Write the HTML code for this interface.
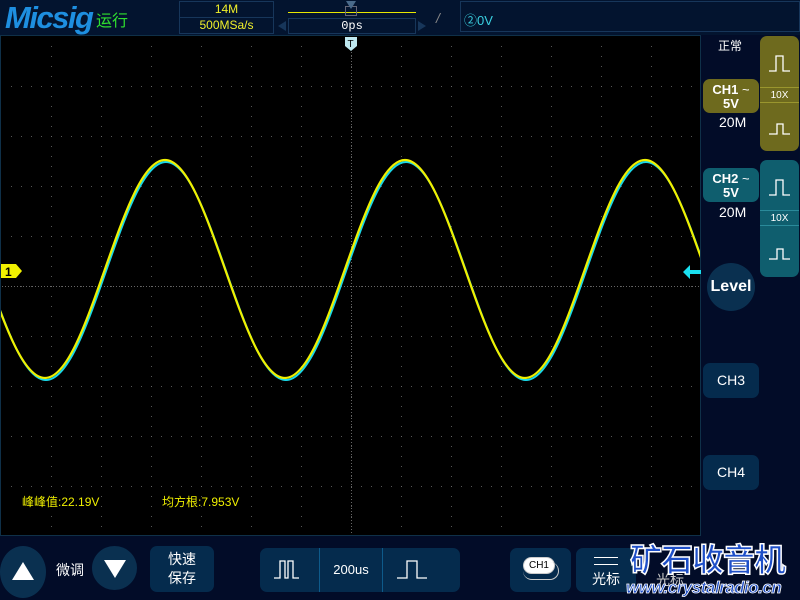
<!DOCTYPE html>
<html><head><meta charset="utf-8"><style>
*{margin:0;padding:0;box-sizing:border-box}
body{width:800px;height:600px;overflow:hidden;background:#020c28;font-family:"Liberation Sans","Noto Sans CJK SC",sans-serif;position:relative;color:#fff}
.a{position:absolute}
.btn{position:absolute;background:#052b4d;border-radius:7px;color:#fff;text-align:center}
</style></head><body>
<div class="a" style="left:0;top:0;width:800px;height:35px;background:#03142f"></div>
<div class="a" style="left:5px;top:0px;font:italic bold 31px 'Liberation Sans',sans-serif;color:#1e8fe0;letter-spacing:-1.5px">Micsig</div>
<div class="a" style="left:96px;top:7px;font-size:16px;color:#2fe02f;font-family:'Noto Sans CJK SC',sans-serif">运行</div>
<div class="a" style="left:179px;top:1px;width:95px;height:33px;border:1px solid #17365a"></div>
<div class="a" style="left:179px;top:17px;width:95px;height:1px;background:#17365a"></div>
<div class="a" style="left:179px;top:2px;width:95px;text-align:center;font-size:12px;color:#f0f02a">14M</div>
<div class="a" style="left:179px;top:18px;width:95px;text-align:center;font-size:12px;color:#f0f02a">500MSa/s</div>
<div class="a" style="left:288px;top:12px;width:128px;height:1px;background:#e8e800"></div>
<div class="a" style="left:345px;top:6px;width:12px;height:10px;border:1px solid #667"></div>
<div class="a" style="left:345px;top:1px;width:0;height:0;border-left:5px solid transparent;border-right:5px solid transparent;border-top:8px solid #4a6a8a;margin-left:1px"></div>
<div class="a" style="left:288px;top:18px;width:128px;height:16px;border:1px solid #17365a;text-align:center;font-size:12px;line-height:14px;font-family:'Liberation Mono',monospace">0ps</div>
<div class="a" style="left:278px;top:21px;border-top:5px solid transparent;border-bottom:5px solid transparent;border-right:8px solid #17365a"></div>
<div class="a" style="left:418px;top:21px;border-top:5px solid transparent;border-bottom:5px solid transparent;border-left:8px solid #17365a"></div>
<div class="a" style="left:436px;top:10px;font-size:14px;color:#888;font-style:italic">/</div>
<div class="a" style="left:460px;top:1px;width:340px;height:31px;border:1px solid #17365a"></div>
<div class="a" style="left:464px;top:10px;font-size:13px;color:#3ad0e0">&#9313;0V</div>

<div class="a" style="left:0;top:35px;width:701px;height:501px;background:#000;border:1px solid #0f3048"></div>
<svg class="a" style="left:0;top:0" width="800" height="600">
<defs><pattern id="g" x="1" y="36" width="50" height="50" patternUnits="userSpaceOnUse">
<rect x="0" y="0" width="1" height="1" fill="#666"/><rect x="10" y="0" width="1" height="1" fill="#555"/><rect x="20" y="0" width="1" height="1" fill="#555"/><rect x="30" y="0" width="1" height="1" fill="#555"/><rect x="40" y="0" width="1" height="1" fill="#555"/>
<rect x="0" y="10" width="1" height="1" fill="#555"/><rect x="0" y="20" width="1" height="1" fill="#555"/><rect x="0" y="30" width="1" height="1" fill="#555"/><rect x="0" y="40" width="1" height="1" fill="#555"/>
</pattern>
<clipPath id="c"><rect x="1" y="36" width="699" height="499"/></clipPath></defs>
<rect x="2" y="37" width="698" height="497" fill="url(#g)"/>
<line x1="2" y1="286.5" x2="700" y2="286.5" stroke="#666" stroke-dasharray="1 2"/>
<line x1="351.5" y1="37" x2="351.5" y2="534" stroke="#666" stroke-dasharray="1 2"/>
<g clip-path="url(#c)">
<path transform="translate(1,2)" d="M-15 269 c20.06 57.2,38.4 109,60 109 c21.6 0,39.94 -51.8,60 -109 c20.06 -57.2,38.4 -109,60 -109 c21.6 0,39.94 51.8,60 109 c20.06 57.2,38.4 109,60 109 c21.6 0,39.94 -51.8,60 -109 c20.06 -57.2,38.4 -109,60 -109 c21.6 0,39.94 51.8,60 109 c20.06 57.2,38.4 109,60 109 c21.6 0,39.94 -51.8,60 -109 c20.06 -57.2,38.4 -109,60 -109 c21.6 0,39.94 51.8,60 109" fill="none" stroke="#1ad8e8" stroke-width="2"/>
<path d="M-15 269 c20.06 57.2,38.4 109,60 109 c21.6 0,39.94 -51.8,60 -109 c20.06 -57.2,38.4 -109,60 -109 c21.6 0,39.94 51.8,60 109 c20.06 57.2,38.4 109,60 109 c21.6 0,39.94 -51.8,60 -109 c20.06 -57.2,38.4 -109,60 -109 c21.6 0,39.94 51.8,60 109 c20.06 57.2,38.4 109,60 109 c21.6 0,39.94 -51.8,60 -109 c20.06 -57.2,38.4 -109,60 -109 c21.6 0,39.94 51.8,60 109" fill="none" stroke="#f0f000" stroke-width="2.2"/>
</g>
<path d="M1 264 h15 l6 7 l-6 7 h-15z" fill="#f0f000"/>
<text x="5" y="276" font-family="Liberation Sans" font-weight="bold" font-size="12" fill="#000">1</text>
<path d="M683 272 l7 -7 v5 h11 v4 h-11 v5z" fill="#1ae0f0"/>
<path d="M345 37 h12 v9 l-6 5 l-6 -5z" fill="#bfe8f0"/>
<text x="347.5" y="47" font-family="Liberation Sans" font-size="10" fill="#000">T</text>
</svg>
<div class="a" style="left:22px;top:493px;font-size:12px;color:#f0f000">峰峰值:22.19V</div>
<div class="a" style="left:162px;top:493px;font-size:12px;color:#f0f000">均方根:7.953V</div>

<!-- right panel -->
<div class="a" style="left:718px;top:37px;font-size:12px">正常</div>
<div class="btn" style="left:703px;top:79px;width:56px;height:34px;background:#6e6a1e;font-weight:bold;font-size:13px;line-height:14px;padding-top:4px">CH1 <span style="font-weight:normal">~</span><br>5V</div>
<div class="a" style="left:719px;top:114px;font-size:14px">20M</div>
<div class="btn" style="left:703px;top:168px;width:56px;height:34px;background:#0f5e6e;font-weight:bold;font-size:13px;line-height:14px;padding-top:4px">CH2 <span style="font-weight:normal">~</span><br>5V</div>
<div class="a" style="left:719px;top:204px;font-size:14px">20M</div>
<div class="btn" style="left:760px;top:36px;width:39px;height:115px;background:#6e6a1e"></div>
<div class="a" style="left:760px;top:87px;width:39px;height:16px;border-top:1px solid #9a962e;border-bottom:1px solid #9a962e;text-align:center;font-size:10px;line-height:15px">10X</div>
<div class="btn" style="left:760px;top:160px;width:39px;height:117px;background:#0f5e6e"></div>
<div class="a" style="left:760px;top:210px;width:39px;height:16px;border-top:1px solid #2a8a9a;border-bottom:1px solid #2a8a9a;text-align:center;font-size:10px;line-height:15px">10X</div>
<svg class="a" style="left:760px;top:36px" width="40" height="241"><g fill="none" stroke="#fff" stroke-width="1.3">
<path d="M9 35 h7 v-15 h7 v15 h7"/><path d="M9 98 h8 v-10 h6 v10 h7"/>
<path d="M9 159 h7 v-15 h7 v15 h7"/><path d="M9 223 h8 v-10 h6 v10 h7"/></g></svg>
<div class="a" style="left:707px;top:263px;width:48px;height:48px;border-radius:50%;background:#0a3050;text-align:center;font-size:16px;font-weight:bold;line-height:48px">Level</div>
<div class="btn" style="left:703px;top:363px;width:56px;height:35px;font-size:14px;line-height:35px">CH3</div>
<div class="btn" style="left:703px;top:455px;width:56px;height:35px;font-size:14px;line-height:35px">CH4</div>

<!-- bottom -->
<div class="a" style="left:0;top:546px;width:46px;height:52px;border-radius:50%;background:#0a3050"></div>
<div class="a" style="left:12px;top:562px;border-left:11px solid transparent;border-right:11px solid transparent;border-bottom:18px solid #fff"></div>
<div class="a" style="left:56px;top:560px;font-size:14px">微调</div>
<div class="a" style="left:92px;top:546px;width:45px;height:44px;border-radius:50%;background:#0a3050"></div>
<div class="a" style="left:104px;top:560px;border-left:11px solid transparent;border-right:11px solid transparent;border-top:18px solid #fff"></div>
<div class="btn" style="left:150px;top:546px;width:64px;height:46px;font-size:14px;line-height:19px;padding-top:4px">快速<br>保存</div>
<div class="btn" style="left:260px;top:548px;width:200px;height:44px"></div>
<div class="a" style="left:319px;top:548px;width:1px;height:44px;background:#0e5a8a"></div>
<div class="a" style="left:382px;top:548px;width:1px;height:44px;background:#0e5a8a"></div>
<div class="a" style="left:320px;top:562px;width:62px;text-align:center;font-size:13px">200us</div>
<svg class="a" style="left:260px;top:548px" width="200" height="44"><g fill="none" stroke="#fff" stroke-width="1.3">
<path d="M14 30 h6 v-17 h5 v17 h3 v-17 h5 v17 h6"/><path d="M137 30 h10 v-17 h10 v17 h10"/></g></svg>
<div class="btn" style="left:510px;top:548px;width:61px;height:44px"></div>
<div class="a" style="left:523px;top:557px;width:32px;height:17px;border-radius:9px;border:1px solid #ccc;background:#fff;color:#000;font-size:10px;text-align:center;line-height:15px">CH1</div>
<div class="a" style="left:523px;top:562px;width:36px;height:18px;border-radius:9px;border-bottom:1px solid #ccc;border-right:1px solid #ccc"></div>
<div class="btn" style="left:576px;top:548px;width:60px;height:44px"></div>
<div class="a" style="left:594px;top:557px;width:24px;height:8px;border-top:1.5px solid #fff;border-bottom:1.5px solid #fff"></div>
<div class="a" style="left:592px;top:569px;font-size:14px">光标</div>
<div class="a" style="left:656px;top:570px;font-size:14px;color:#ccc">光标</div>
<div class="a" style="left:630px;top:535px;font:bold 32px 'Noto Sans CJK SC',sans-serif;color:#1e4fc8;-webkit-text-stroke:1.5px #fff;letter-spacing:-1px">矿石收音机</div>
<div class="a" style="left:626px;top:578px;font:bold italic 17px 'Liberation Sans',sans-serif;color:#1e4fc8;-webkit-text-stroke:0.8px #fff;letter-spacing:-0.5px">www.crystalradio.cn</div>
</body></html>
